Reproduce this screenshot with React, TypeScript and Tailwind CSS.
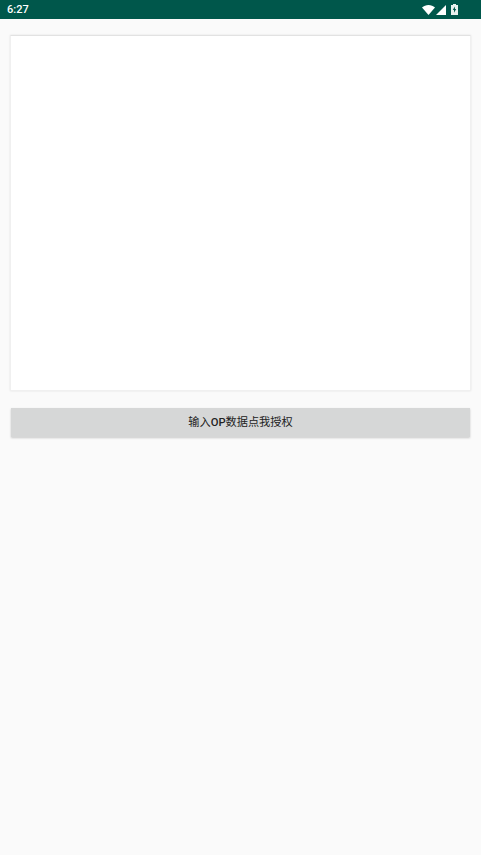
export default function App() {
  return (
    <div className="min-h-[855px] bg-[#fafafa] font-['Roboto','Noto_Sans_CJK_SC',sans-serif]">
      <div className="h-[19px] bg-[#00574b] flex items-center justify-between pl-[7px] pr-[23px] text-white">
        <span className="text-[11px] font-medium leading-none">6:27</span>
        <div className="flex items-center gap-[1px]">
          <svg width="13" height="10" viewBox="0 0 13 10"><path d="M0 2.6C1.8 1 4 0 6.5 0S11.200 1 13 2.600L6.500 10z" fill="#fff" /></svg>
          <svg width="10" height="10" viewBox="0 0 10 10"><path d="M0 10L10 0v10z" fill="#fff" /></svg>
          <svg className="ml-[4px]" width="7" height="11" viewBox="0 0 7 11">
            <path d="M2 0h3v1h2v10H0V1h2z" fill="#e8f0ee" />
            <path d="M3.800 2.500L1.800 6h1.200v2.800L5.200 5H4z" fill="#00574b" />
          </svg>
        </div>
      </div>
      <div className="px-[10px] pt-[16px]">
        <div className="h-[356px] bg-white border border-[#f0f0f0] border-t-[#e2e2e2] shadow-[0_0_2px_rgba(0,0,0,0.1)]"></div>
        <div className="px-[1px] pt-[17px]">
          <button className="w-full h-[29px] bg-[#d6d7d7] shadow-[0_1px_2px_rgba(0,0,0,0.2)] text-[11.2px] text-[#222] flex items-center justify-center pt-[2px]">
            <span>输入<span className="font-medium">OP</span>数据点我授权</span>
          </button>
        </div>
      </div>
    </div>
  )
}
